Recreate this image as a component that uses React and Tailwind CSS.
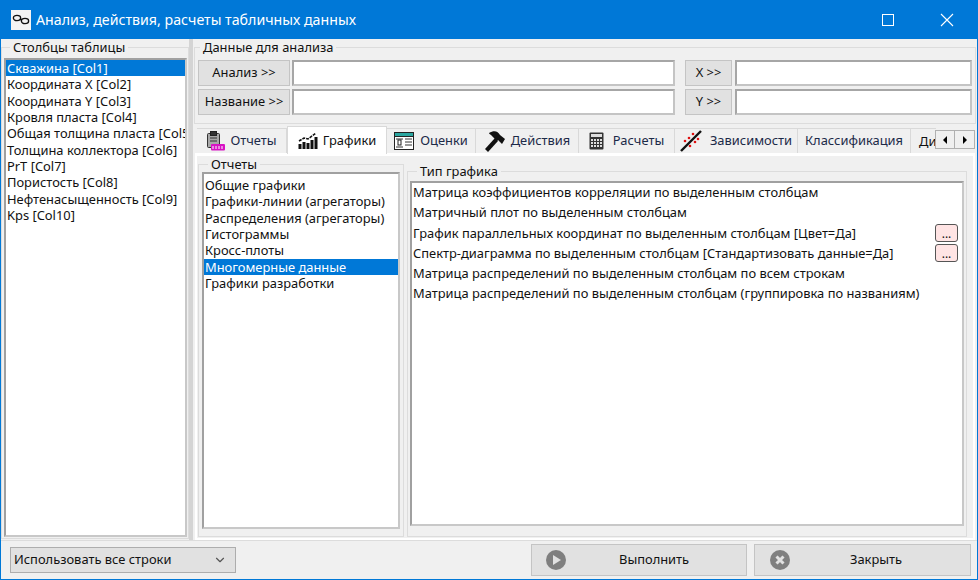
import React from 'react';
import { ChevronDown } from 'lucide-react';

const columns = [
    'Скважина [Col1]',
    'Координата X [Col2]',
    'Координата Y [Col3]',
    'Кровля пласта [Col4]',
    'Общая толщина пласта [Col5]',
    'Толщина коллектора [Col6]',
    'PrT [Col7]',
    'Пористость [Col8]',
    'Нефтенасыщенность [Col9]',
    'Kps [Col10]',
];

const reports = [
    'Общие графики',
    'Графики-линии (агрегаторы)',
    'Распределения (агрегаторы)',
    'Гистограммы',
    'Кросс-плоты',
    'Многомерные данные',
    'Графики разработки',
];

const chartTypes = [
    { label: 'Матрица коэффициентов корреляции по выделенным столбцам' },
    { label: 'Матричный плот по выделенным столбцам' },
    { label: 'График параллельных координат по выделенным столбцам [Цвет=Да]', more: true },
    { label: 'Спектр-диаграмма по выделенным столбцам [Стандартизовать данные=Да]', more: true },
    { label: 'Матрица распределений по выделенным столбцам по всем строкам' },
    { label: 'Матрица распределений по выделенным столбцам (группировка по названиям)' },
];

const ReportIcon = () => (
    <svg width="19" height="20" viewBox="0 0 19 20">
        <rect x="1.5" y="2.5" width="12" height="14" rx="1" fill="#a8a8a8" stroke="#333" />
        <rect x="4.5" y="0.5" width="6" height="4" fill="#333" stroke="#222" />
        <path d="M4 7h7M4 10h7" stroke="#333" />
        <rect x="5" y="13" width="14" height="6.5" rx="1" fill="#d812c4" />
        <path d="M7 15v3M10 15v3M13 15v3M16 15v3" stroke="#fff" />
    </svg>
);

const ChartIcon = () => (
    <svg width="20" height="18" viewBox="0 0 20 18">
        <path d="M1 9l5-3 4 1 8-6" fill="none" stroke="#111" strokeWidth="1.6" strokeDasharray="3 1" />
        <path d="M2 17v-5M6 17v-7M10 17v-6M14 17v-9M18 17v-12" stroke="#111" strokeWidth="3" />
    </svg>
);

const TableIcon = () => (
    <svg width="20" height="18" viewBox="0 0 20 18">
        <rect x="0.5" y="0.5" width="19" height="17" fill="#fff" stroke="#222" />
        <rect x="1" y="1" width="18" height="3" fill="#2aa6a0" />
        <path d="M1 4.500h18" stroke="#222" />
        <path d="M11 7h7M11 10h7M11 13h7M2 7h7M2 15h7" stroke="#333" />
        <rect x="4" y="8" width="3" height="5" fill="#fff" stroke="#222" />
    </svg>
);

const HammerIcon = () => (
    <svg width="22" height="22" viewBox="0 0 22 22">
        <path d="M1 19l10-11 3 3L4 22z" fill="#111" />
        <path d="M5 3c5-3 9-2 11 2l5 4-3 5-4-4-1 1-6-6c-1-1-2-1-2-2z" fill="#111" />
    </svg>
);

const CalcIcon = () => (
    <svg width="15" height="18" viewBox="0 0 15 18">
        <rect x="0.5" y="0.5" width="14" height="17" rx="1" fill="#333" />
        <rect x="2" y="2" width="11" height="3" fill="#ddd" />
        <path d="M2 8h11M2 11h11M2 14h11" stroke="#ddd" strokeDasharray="2 1" strokeWidth="2" />
    </svg>
);

const ScatterIcon = () => (
    <svg width="22" height="22" viewBox="0 0 22 22">
        <path d="M1 21L21 1" stroke="#111" strokeWidth="2.4" />
        <circle cx="5" cy="11" r="1.3" fill="#e01010" />
        <circle cx="9" cy="8" r="1.3" fill="#e01010" />
        <circle cx="13" cy="4" r="1.3" fill="#e01010" />
        <circle cx="10" cy="16" r="1.3" fill="#e01010" />
        <circle cx="15" cy="12" r="1.3" fill="#e01010" />
        <circle cx="18" cy="9" r="1.3" fill="#e01010" />
    </svg>
);

const tabs = [
    { label: 'Отчеты', icon: <ReportIcon />, w: 'w-[90px]', gap: 'gap-[5px]' },
    { label: 'Графики', icon: <ChartIcon />, w: 'w-[100px]', gap: 'gap-[5px]', active: true },
    { label: 'Оценки', icon: <TableIcon />, w: 'w-[89px]', gap: 'gap-[6px]' },
    { label: 'Действия', icon: <HammerIcon />, w: 'w-[103px]', gap: 'gap-[5px]' },
    { label: 'Расчеты', icon: <CalcIcon />, w: 'w-[96px]', gap: 'gap-[9px]' },
    { label: 'Зависимости', icon: <ScatterIcon />, w: 'w-[123px]', gap: 'gap-[8px]' },
    { label: 'Классификация', w: 'w-[113px]', gap: 'gap-0' },
];

const Group = ({ title, className, legendClass, children }) => (
    <fieldset className={`border border-[#dcdcdc] min-w-0 ${className}`}>
        <legend className={`leading-[13px] px-[3px] ${legendClass}`}>{title}</legend>
        {children}
    </fieldset>
);

const Field = ({ className }) => (
    <div className={`h-[26px] bg-white border-2 border-[#a6a6a6] border-r-[#c4c4c4] border-b-[#c4c4c4] ${className}`} />
);

const PickButton = ({ className, children }) => (
    <div className={`h-[26px] flex items-center justify-center bg-[#e1e1e1] border border-[#c4c4c4] ${className}`}>{children}</div>
);

const ListBox = ({ items, selected, className }) => (
    <div className={`bg-white border-2 border-[#a0a0a0] border-r-[#c8c8c8] border-b-[#c8c8c8] overflow-hidden ${className}`}>
        {items.map((item) => (
            <div
                key={item}
                className={`h-[16.33px] leading-[16px] pl-[1px] whitespace-nowrap ${item === selected ? 'bg-[#0078d7] text-white' : ''}`}
            >
                {item}
            </div>
        ))}
    </div>
);

export default function App() {
    return (
        <div className="w-[978px] h-[580px] flex flex-col bg-[#f0f0f0] border border-t-0 border-[#0078d7] text-[12.9px] text-[#111] font-['Noto_Sans',sans-serif] overflow-hidden">
            {/* title bar */}
            <div className="h-[39px] shrink-0 -mx-px bg-[#0078d7] flex items-center text-white">
                <div className="w-[20px] h-[20px] ml-[11px] bg-[#f4f4f4] flex items-center justify-center">
                    <svg width="18" height="11" viewBox="0 0 18 11">
                        <ellipse cx="5" cy="4" rx="3.6" ry="2.6" fill="none" stroke="#111" strokeWidth="1.4" />
                        <ellipse cx="13" cy="7" rx="3.6" ry="2.6" fill="none" stroke="#111" strokeWidth="1.4" />
                        <path d="M8 5l2 1" stroke="#111" strokeWidth="1.4" />
                    </svg>
                </div>
                <div className="ml-[5px] text-[14.2px]">Анализ, действия, расчеты табличных данных</div>
                <div className="ml-auto mr-[13px] w-[46px] h-full flex items-center justify-center">
                    <div className="w-[12px] h-[12px] border border-white" />
                </div>
                <div className="mr-[8px] w-[46px] h-full flex items-center justify-center">
                    <svg width="14" height="14" viewBox="0 0 14 14">
                        <path d="M1 1l12 12M13 1L1 13" stroke="#fff" strokeWidth="1.1" />
                    </svg>
                </div>
            </div>

            <div className="flex-1 flex min-h-0 border-b border-[#dcdcdc]">
                {/* left panel */}
                <div className="w-[188px] shrink-0 pt-[2px] pb-[1px]">
                    <Group title="Столбцы таблицы" legendClass="ml-[6px]" className="h-full pl-[2px] pr-[1px] pb-[2px]">
                        <ListBox items={columns} selected={columns[0]} className="h-[479px] mt-[4px]" />
                    </Group>
                </div>
                <div className="w-[4px] shrink-0 bg-[#d4d4d4]" />

                {/* right panel */}
                <div className="flex-1 min-w-0 flex flex-col pt-[2px]">
                    <Group title="Данные для анализа" legendClass="ml-[2px]" className="h-[83px] mx-[1px] px-[3px]">
                        <div className="flex mt-[6px]">
                            <PickButton className="w-[92px]">Анализ &gt;&gt;</PickButton>
                            <Field className="w-[383px] ml-[2px]" />
                            <PickButton className="w-[47px] ml-[10px]">X &gt;&gt;</PickButton>
                            <Field className="w-[237px] ml-[3px]" />
                        </div>
                        <div className="flex mt-[3px]">
                            <PickButton className="w-[92px]">Название &gt;&gt;</PickButton>
                            <Field className="w-[383px] ml-[2px]" />
                            <PickButton className="w-[47px] ml-[10px]">Y &gt;&gt;</PickButton>
                            <Field className="w-[237px] ml-[3px]" />
                        </div>
                    </Group>

                    {/* tabs */}
                    <div className="h-[26px] mt-[3px] flex items-end ml-[4px] relative">
                        {tabs.map((t) => (
                            <div
                                key={t.label}
                                className={`${t.w} ${t.gap} flex items-center justify-center shrink-0 border-[#d9d9d9] border-r ${t.active ? 'h-[28px] bg-white border-l border-t relative z-10 -mb-[1px]' : 'h-[25px] bg-[#f0f0f0] border-t text-[#1c2a48]'}`}
                            >
                                {t.icon}
                                <span>{t.label}</span>
                            </div>
                        ))}
                        <div className="w-[25px] h-[25px] overflow-hidden whitespace-nowrap border-t border-[#d9d9d9] pl-[8px] leading-[25px]">Ди</div>
                        <div className="absolute right-[2px] top-[3px] flex">
                            <div className="w-[20px] h-[19px] bg-[#f0f0f0] border border-[#b0b0b0] flex items-center justify-center">
                                <div className="border-y-[4px] border-y-transparent border-r-[4px] border-r-black" />
                            </div>
                            <div className="w-[20px] h-[19px] bg-[#f0f0f0] border border-[#b0b0b0] border-l-0 flex items-center justify-center">
                                <div className="border-y-[4px] border-y-transparent border-l-[4px] border-l-black" />
                            </div>
                        </div>
                    </div>

                    {/* tab page */}
                    <div className="flex-1 min-h-0 ml-[2px] mr-[2px] border-2 border-white border-t-[3px] flex gap-[3px] px-[1px] pb-[1px]">
                        <Group title="Отчеты" legendClass="ml-[6px]" className="w-[206px] shrink-0 mt-[2px] px-[3px] pb-[2px]">
                            <ListBox items={reports} selected="Многомерные данные" className="h-[357px] mt-[1px] pt-[3px]" />
                        </Group>
                        <Group title="Тип графика" legendClass="ml-[7px]" className="flex-1 min-w-0 mt-[9px] px-[2px] pb-[4px] mr-[5px]">
                            <div className="h-[345px] mt-[3px] bg-white border-2 border-[#a0a0a0] border-r-[#c8c8c8] border-b-[#c8c8c8] pl-[1px]">
                                {chartTypes.map((c) => (
                                    <div key={c.label} className="h-[20.1px] flex items-center">
                                        <span className="whitespace-nowrap">{c.label}</span>
                                        {c.more && (
                                            <div className="ml-auto mr-[4px] w-[23px] h-[18px] bg-[#ffe4e4] border border-[#555] rounded-[3px] flex items-end justify-center text-[12px] leading-[14px]">
                                                ...
                                            </div>
                                        )}
                                    </div>
                                ))}
                            </div>
                        </Group>
                    </div>
                </div>
            </div>

            {/* bottom bar */}
            <div className="h-[38px] shrink-0 flex items-center pl-[9px] pr-[6px]">
                <div className="w-[226px] h-[26px] bg-[#e1e1e1] border border-[#adadad] flex items-center justify-between pl-[3px] pr-[8px]">
                    <span>Использовать все строки</span>
                    <ChevronDown size={14} className="text-[#555]" />
                </div>
                <div className="ml-auto w-[216px] h-[32px] bg-[#e1e1e1] border border-[#c4c4c4] flex items-center">
                    <svg className="ml-[14px]" width="20" height="20" viewBox="0 0 20 20">
                        <circle cx="10" cy="10" r="10" fill="#7f7f7f" />
                        <path d="M7 5l8 5-8 5z" fill="#e1e1e1" />
                    </svg>
                    <span className="ml-[53px]">Выполнить</span>
                </div>
                <div className="ml-[7px] w-[217px] h-[32px] bg-[#e1e1e1] border border-[#c4c4c4] flex items-center">
                    <svg className="ml-[15px]" width="20" height="20" viewBox="0 0 20 20">
                        <circle cx="10" cy="10" r="10" fill="#7f7f7f" />
                        <path d="M6.5 6.5l7 7M13.5 6.5l-7 7" stroke="#e1e1e1" strokeWidth="3" />
                    </svg>
                    <span className="ml-[60px]">Закрыть</span>
                </div>
            </div>
        </div>
    );
}
